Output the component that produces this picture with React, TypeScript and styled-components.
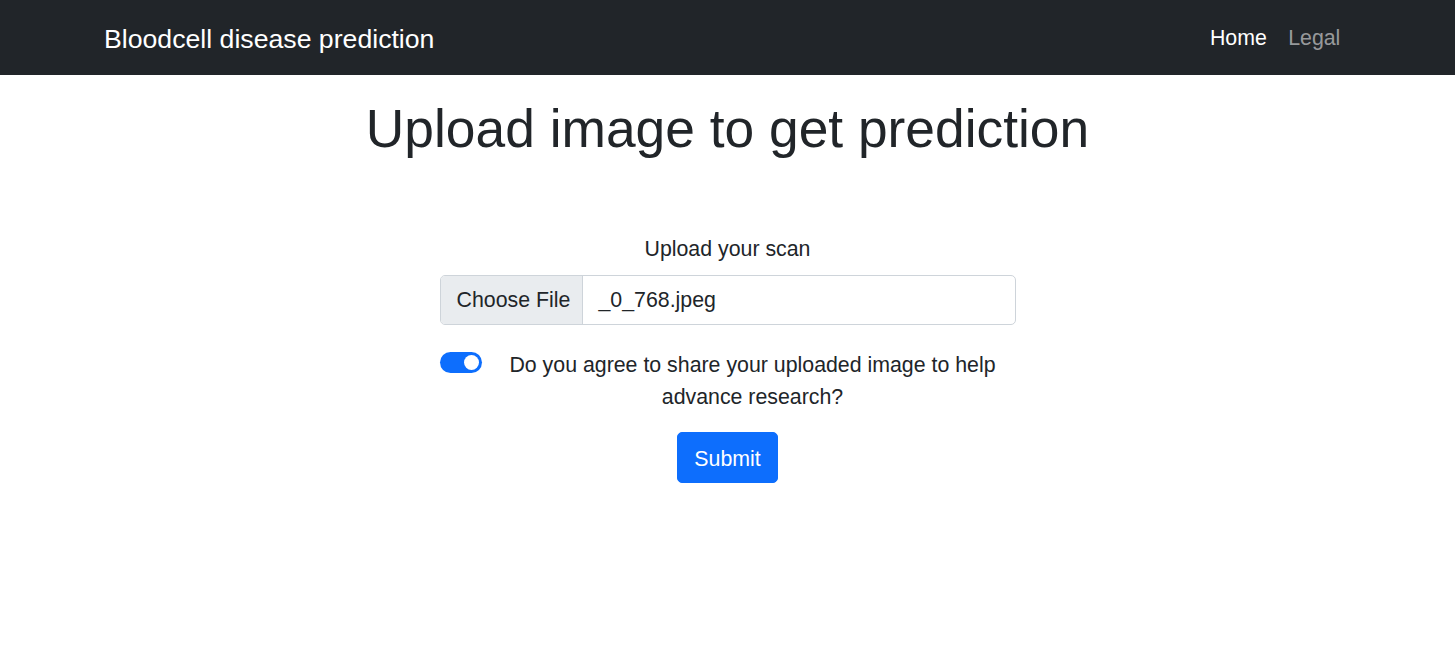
import React from "react";
import styled, { createGlobalStyle } from "styled-components";

const GlobalStyle = createGlobalStyle`
  html, body { margin: 0; padding: 0; background: #fff; }
  body {
    font-family: "Segoe UI", "Liberation Sans", Arial, sans-serif;
    font-size: 21.33px;
    line-height: 1.5;
    color: #212529;
  }
  * { box-sizing: border-box; }
`;

const Page = styled.div`
  min-height: 671px;
  background: #fff;
`;

const NavBar = styled.nav`
  background: #212529;
  height: 75px;
  display: flex;
  align-items: center;
`;

const NavContainer = styled.div`
  width: 100%;
  padding: 3px 104px 0 104px;
  display: flex;
  align-items: center;
  justify-content: space-between;
`;

const Brand = styled.a`
  font-size: 26.67px;
  color: #fff;
  text-decoration: none;
  line-height: 1.5;
`;

const NavLinks = styled.div`
  display: flex;
  align-items: center;
  margin-right: 0;
`;

const NavLink = styled.a<{ $active?: boolean }>`
  padding: 10.67px;
  color: ${(p) => (p.$active ? "#fff" : "rgba(255,255,255,0.55)")};
  text-decoration: none;
  font-size: 21.33px;
`;

const Main = styled.main`
  display: flex;
  flex-direction: column;
  align-items: center;
  padding-top: 22px;
`;

const Title = styled.h1`
  margin: 0;
  font-size: 53.33px;
  font-weight: 500;
  line-height: 1.2;
  color: #212529;
  text-align: center;
`;

const Form = styled.form`
  width: 576px;
  margin-top: 70px;
  display: flex;
  flex-direction: column;
  align-items: stretch;
`;

const Label = styled.label`
  display: block;
  text-align: center;
  padding-top: 3px;
  margin-bottom: 9px;
`;

const FileInput = styled.div`
  display: flex;
  height: 50px;
  border: 1px solid #ced4da;
  border-radius: 5px;
  overflow: hidden;
  background: #fff;
`;

const FileButton = styled.span`
  display: flex;
  align-items: center;
  padding: 3px 16px 0;
  background: #e9ecef;
  border-right: 1px solid #ced4da;
  color: #212529;
  width: 142px;
  white-space: nowrap;
`;

const FileName = styled.span`
  display: flex;
  align-items: center;
  padding: 3px 16px 0;
  color: #212529;
`;

const CheckRow = styled.div`
  display: flex;
  align-items: flex-start;
  gap: 8px;
  margin-top: 22px;
`;

const Switch = styled.span`
  flex: none;
  width: 42px;
  height: 21px;
  margin-top: 5px;
  border-radius: 11px;
  background: #0d6efd;
  display: flex;
  align-items: center;
  justify-content: flex-end;
  padding-right: 3px;
`;

const Knob = styled.span`
  width: 15px;
  height: 15px;
  border-radius: 50%;
  background: #fff;
`;

const CheckLabel = styled.label`
  flex: 1;
  text-align: center;
  padding-top: 3px;
`;

const SubmitWrap = styled.div`
  display: flex;
  justify-content: center;
  margin-top: 18px;
`;

const SubmitButton = styled.button`
  font-family: inherit;
  font-size: 21.33px;
  line-height: 1.5;
  color: #fff;
  background: #0d6efd;
  border: 1px solid #0d6efd;
  border-radius: 5px;
  padding: 11px 16px 5px;
  height: 51px;
  width: 101px;
  cursor: pointer;
`;

export default function App() {
  return (
    <Page>
      <GlobalStyle />
      <NavBar>
        <NavContainer>
          <Brand href="#">Bloodcell disease prediction</Brand>
          <NavLinks>
            <NavLink href="#" $active>
              Home
            </NavLink>
            <NavLink href="#">Legal</NavLink>
          </NavLinks>
        </NavContainer>
      </NavBar>
      <Main>
        <Title>Upload image to get prediction</Title>
        <Form onSubmit={(e) => e.preventDefault()}>
          <Label>Upload your scan</Label>
          <FileInput>
            <FileButton>Choose File</FileButton>
            <FileName>_0_768.jpeg</FileName>
          </FileInput>
          <CheckRow>
            <Switch>
              <Knob />
            </Switch>
            <CheckLabel>
              Do you agree to share your uploaded image to help advance research?
            </CheckLabel>
          </CheckRow>
          <SubmitWrap>
            <SubmitButton type="submit">Submit</SubmitButton>
          </SubmitWrap>
        </Form>
      </Main>
    </Page>
  );
}
